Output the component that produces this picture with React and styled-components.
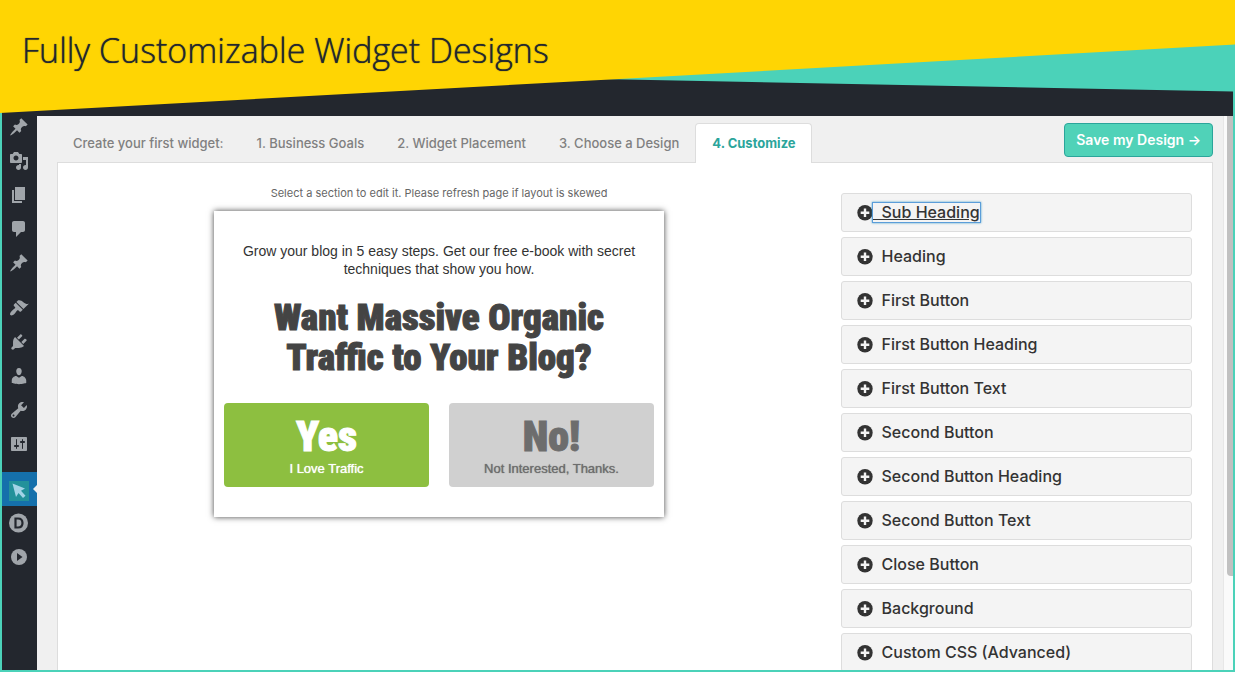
import React from 'react';
import styled, { createGlobalStyle, css } from 'styled-components';

const teal = '#4bd2b9';
const navy = '#23272e';
const uiFont = "Inter, 'Liberation Sans', sans-serif";

const GlobalStyle = createGlobalStyle`
  *, *::before, *::after { box-sizing: border-box; }
  body { margin: 0; background: #fff; font-family: ${uiFont}; color: #333; }
  h1, h2, p, ul { margin: 0; padding: 0; }
  ul { list-style: none; }
  a { color: inherit; text-decoration: none; }
`;

const Page = styled.div`
  display: flex;
  flex-direction: column;
  height: 100vh;
  padding-bottom: 28px;
`;

const Banner = styled.header`
  position: relative;
  flex: none;
  height: 116px;
  padding: 26px 22px;
`;

const BannerArt = styled.svg`
  position: absolute;
  inset: 0;
  width: 100%;
  height: 100%;
`;

const Title = styled.h1`
  position: relative;
  font: 300 34px/48px 'Open Sans', 'Noto Sans', sans-serif;
  color: ${navy};
  text-shadow: 0 0 1px ${navy};
`;

const Frame = styled.div`
  display: flex;
  flex: 1;
  min-height: 0;
  border: solid ${teal};
  border-width: 0 2px 2px;
  background: #f0f0f0;
`;

const Sidebar = styled.nav`
  flex: none;
  width: 35px;
  background: ${navy};
  color: #a0a5aa;
`;

const MenuGroups = styled.div`
  position: relative;
  display: flex;
  flex-direction: column;
  gap: 11px;
  margin-top: -6px;
`;

const MenuLink = styled.a`
  position: relative;
  display: flex;
  align-items: center;
  justify-content: center;
  height: 34px;
  padding-right: 1px;
  ${(p) => p.$active && css`
    padding-top: 4px;
    background: #1570ab;
    &::after {
      content: '';
      position: absolute;
      right: 0;
      top: 13px;
      border: solid transparent;
      border-width: 4px 4px 4px 0;
      border-right-color: #f0f0f0;
    }
  `}
`;

const Main = styled.main`
  display: flex;
  flex-direction: column;
  flex: 1;
  min-width: 0;
  padding: 7px 10px 0 20px;
  overflow: hidden;
`;

const Wizard = styled.div`
  display: flex;
  align-items: flex-start;
  justify-content: space-between;
  flex: none;
`;

const Steps = styled.div`
  display: flex;
  position: relative;
  margin-bottom: -1px;
`;

const stepBox = css`
  height: 40px;
  padding: 0 15px 0 16px;
  border: 1px solid transparent;
  border-bottom: 0;
  font-size: 13px;
  line-height: 39px;
  white-space: nowrap;
`;

const StepsLabel = styled.span`
  ${stepBox}
  padding-left: 15px;
  font-weight: 500;
  color: #808080;
`;

const Step = styled.a`
  ${stepBox}
  font-weight: ${(p) => (p.$active ? 700 : 500)};
  color: ${(p) => (p.$active ? '#2ba59b' : '#808080')};
  ${(p) => p.$active && css`
    border-color: #ddd;
    border-radius: 4px 4px 0 0;
    background: #fff;
  `}
`;

const SaveButton = styled.button`
  height: 34px;
  padding: 0 11px;
  border: 1px solid #2ba59b;
  border-radius: 4px;
  background: #50d2b8;
  color: #fff;
  font: 600 14px/32px ${uiFont};
  white-space: nowrap;
`;

const Panel = styled.section`
  display: grid;
  grid-template-columns: minmax(0, 1fr) 351px;
  gap: 21px;
  flex: 1;
  min-height: 0;
  padding: 0 20px 0 0;
  border: 1px solid #ddd;
  border-bottom: 0;
  background: #fff;
  overflow: hidden;
`;

const Preview = styled.div`
  display: flex;
  flex-direction: column;
  align-items: center;
  padding-top: 20px;
`;

const Hint = styled.p`
  font-size: 11px;
  line-height: 20px;
  color: #666;
`;

const Widget = styled.article`
  width: 450px;
  max-width: 100%;
  margin-top: 8px;
  padding: 31px 10px 30px;
  background: #fff;
  box-shadow: 0 0 6px #444;
  font-family: 'Liberation Sans', Arial, sans-serif;
  text-align: center;
`;

const heavyFont = "Impact, 'Roboto Condensed', 'Liberation Sans Narrow', Roboto, sans-serif";

const Lead = styled.p`
  padding: 0 16px;
  font-size: 14px;
  line-height: 18px;
`;

const Headline = styled.h2`
  margin: 20px 0 25px;
  font: 900 37px/40px ${heavyFont};
  color: #444;
  -webkit-text-stroke: 1px #444;
`;

const Choices = styled.div`
  display: grid;
  grid-template-columns: 1fr 1fr;
  gap: 20px;
`;

const Choice = styled.button`
  display: flex;
  flex-direction: column;
  align-items: center;
  height: 84px;
  padding: 10px 0 0;
  border: 0;
  border-radius: 4px;
  background: ${(p) => (p.$primary ? '#8dbf40' : '#d0d0d0')};
  color: ${(p) => (p.$primary ? '#fff' : '#6d6d6d')};
  font: 13px/18px 'Liberation Sans', Arial, sans-serif;
`;

const ChoiceTitle = styled.strong`
  font: 900 42px/47px ${heavyFont};
  -webkit-text-stroke: 1px currentColor;
`;

const ChoiceText = styled.span`
  text-shadow: 0 0 1px currentColor;
`;

const Sections = styled.ul`
  display: flex;
  flex-direction: column;
  gap: 5px;
  padding-top: 30px;
`;

const SectionRow = styled.li`
  display: flex;
  align-items: center;
  flex: none;
  height: 39px;
  padding: 0 15px;
  border: 1px solid #ddd;
  border-radius: 3px;
  background: #f4f4f4;
`;

const SectionLink = styled.a`
  font-size: 16px;
  line-height: 19px;
  font-weight: 500;
  white-space: pre;
  ${(p) => p.$focused && css`
    text-decoration: underline;
    outline: 1px solid #5b9dd9;
    box-shadow: 0 0 2px 1px rgba(30, 140, 190, 0.8);
  `}
`;

const ScrollTrack = styled.div`
  flex: none;
  width: 10px;
  padding-left: 3px;
  border-left: 1px solid #e7e7e7;
  background: #fafafa;
`;

const ScrollThumb = styled.div`
  height: 83%;
  border-radius: 0 0 0 4px;
  background: #c1c1c1;
`;

const pin = 'M10.44 3.02l1.82-1.82 6.36 6.35-1.83 1.82c-1.05-.68-2.48-.57-3.41.36l-.75.75c-.92.93-1.04 2.35-.35 3.41l-1.83 1.82-2.41-2.41-2.8 2.79c-.42.42-3.38 2.71-3.8 2.29s1.86-3.39 2.28-3.81l2.79-2.79L4.1 9.36l1.83-1.82c1.05.69 2.48.57 3.4-.36l.75-.75c.93-.92 1.05-2.35.36-3.41z';

const menu = [
  [
    { label: 'Posts', d: pin },
    { label: 'Media', d: 'M13 11V4c0-.55-.45-1-1-1h-1.67L9 1H5L3.67 3H2c-.55 0-1 .45-1 1v7c0 .55.45 1 1 1h10c.55 0 1-.45 1-1zM7 4.5c1.38 0 2.5 1.12 2.5 2.5S8.38 9.5 7 9.5 4.5 8.38 4.5 7 5.62 4.5 7 4.5zM14 6h5v10.5c0 1.38-1.12 2.5-2.5 2.5S14 17.88 14 16.5s1.12-2.5 2.5-2.5c.17 0 .34.02.5.05V9h-3V6zm-4 8.05V13h2v3.5c0 1.38-1.12 2.5-2.5 2.5S7 17.88 7 16.5 8.12 14 9.5 14c.17 0 .34.02.5.05z' },
    { label: 'Pages', d: 'M6 15V2h10v13H6zm-1 1h8v2H3V5h2v11z' },
    { label: 'Comments', d: 'M5 2h9c1.1 0 2 .9 2 2v7c0 1.1-.9 2-2 2h-2l-5 5v-5H5c-1.1 0-2-.9-2-2V4c0-1.1.9-2 2-2z' },
    { label: 'Projects', d: pin },
  ],
  [
    { label: 'Appearance', d: 'M14.48 11.06L7.41 3.99l1.5-1.5c.5-.56 2.3-.47 3.51.32 1.21.8 1.43 1.28 2.91 2.1 1.18.64 2.45 1.26 4.45.85zm-.71.71L6.7 4.7 4.93 6.47c-.39.39-.39 1.02 0 1.41l1.06 1.06c.39.39.39 1.03 0 1.42-.6.6-1.43 1.11-2.21 1.69-.35.26-.7.53-1.01.84C1.43 14.23.4 16.08 1.4 17.07c.99 1 2.84-.03 4.18-1.36.31-.31.58-.66.85-1.02.57-.78 1.08-1.61 1.69-2.21.39-.39 1.02-.39 1.41 0l1.06 1.06c.39.39 1.02.39 1.41 0z' },
    { label: 'Plugins', d: 'M13.11 4.36L9.87 7.6 8 5.73l3.24-3.24c.35-.34 1.05-.2 1.56.32.52.51.66 1.21.31 1.55zm-8 1.77l.91-1.12 9.01 9.01-1.19.84c-.71.71-2.63 1.16-3.82 1.16H6.14L4.9 17.26c-.59.59-1.54.59-2.12 0-.59-.58-.59-1.53 0-2.12l1.24-1.24v-3.88c0-1.13.4-3.19 1.09-3.89zm7.26 3.97l3.24-3.24c.34-.35 1.04-.21 1.55.31.52.51.66 1.21.31 1.55l-3.24 3.25z' },
    { label: 'Users', d: 'M10 9.25c-2.27 0-2.73-3.44-2.73-3.44C7 4.02 7.82 2 9.97 2c2.16 0 2.98 2.02 2.71 3.81 0 0-.41 3.44-2.68 3.44zm0 2.57L12.72 10c2.39 0 4.52 2.33 4.52 4.53v2.49s-3.65 1.13-7.24 1.13c-3.65 0-7.24-1.13-7.24-1.13v-2.49c0-2.25 1.94-4.48 4.47-4.48z' },
    { label: 'Tools', d: 'M16.68 9.77c-1.34 1.34-3.3 1.67-4.95.99l-5.41 6.52c-.99.99-2.59.99-3.58 0s-.99-2.59 0-3.57l6.52-5.42c-.68-1.65-.35-3.61.99-4.95 1.28-1.28 3.12-1.62 4.72-1.06l-2.89 2.89 2.82 2.82 2.86-2.87c.53 1.58.18 3.39-1.08 4.65zM3.81 16.21c.4.39 1.04.39 1.43 0 .4-.4.4-1.04 0-1.43-.39-.4-1.03-.4-1.43 0-.39.39-.39 1.03 0 1.43z' },
    { label: 'Settings', d: 'M18 16V4c0-.55-.45-1-1-1H3c-.55 0-1 .45-1 1v12c0 .55.45 1 1 1h14c.55 0 1-.45 1-1zM8 11h1c.55 0 1 .45 1 1s-.45 1-1 1H8v1.5c0 .28-.22.5-.5.5s-.5-.22-.5-.5V13H6c-.55 0-1-.45-1-1s.45-1 1-1h1V5.5c0-.28.22-.5.5-.5s.5.22.5.5V11zm5-2h-1c-.55 0-1-.45-1-1s.45-1 1-1h1V5.5c0-.28.22-.5.5-.5s.5.22.5.5V7h1c.55 0 1 .45 1 1s-.45 1-1 1h-1v5.5c0 .28-.22.5-.5.5s-.5-.22-.5-.5V9z' },
  ],
  [
    {
      label: 'Widgets',
      active: true,
      art: (
        <>
          <path fill="#23919a" d="M0 0h20v20H0z" />
          <path fill="#a3d3e6" d="M3.500 2.500l12.500 5-4 2.200 4.500 5-2.500 2.300-4.500-5-2.500 4z" />
        </>
      ),
    },
    {
      label: 'Divi',
      art: (
        <>
          <circle cx="9.500" cy="10" r="9.500" fill="currentColor" />
          <path fill="none" stroke={navy} strokeWidth="2.200" d="M6.500 5.500h2.500c2.800 0 4.500 1.700 4.500 4.500s-1.700 4.500-4.500 4.500h-2.500z" />
        </>
      ),
    },
    {
      label: 'Collapse menu',
      art: (
        <>
          <circle cx="10" cy="10" r="8" fill="currentColor" />
          <path fill={navy} d="M8 6l5.500 4-5.500 4z" />
        </>
      ),
    },
  ],
];

const steps = ['1. Business Goals', '2. Widget Placement', '3. Choose a Design', '4. Customize'];

const sections = [
  'Sub Heading', 'Heading', 'First Button', 'First Button Heading', 'First Button Text',
  'Second Button', 'Second Button Heading', 'Second Button Text', 'Close Button',
  'Background', 'Custom CSS (Advanced)',
];

function PlusIcon() {
  return (
    <svg width="16" height="16" viewBox="0 0 16 16" aria-hidden="true">
      <circle cx="8" cy="7.700" r="7.700" fill="#333" />
      <path d="M8 3.400v8.600M3.700 7.700h8.600" stroke="#f4f4f4" strokeWidth="2.400" />
    </svg>
  );
}

export default function App() {
  return (
    <Page>
      <GlobalStyle />
      <Banner>
        <BannerArt viewBox="0 0 1235 116" preserveAspectRatio="none" aria-hidden="true">
          <path fill={teal} d="M0 0h1235v116H0z" />
          <path fill={navy} d="M2 112L600 79 1233 91.500V116H2z" />
          <path fill="#ffd503" d="M0 0h1235v44.500L610 79.500 0 113z" />
        </BannerArt>
        <Title>Fully Customizable Widget Designs</Title>
      </Banner>
      <Frame>
        <Sidebar aria-label="Admin menu">
          <MenuGroups>
            {menu.map((group, i) => (
              <ul key={i}>
                {group.map((item, j) => (
                  <li key={j}>
                    <MenuLink href="#" $active={item.active} aria-label={item.label}>
                      <svg width="20" height="20" viewBox="0 0 20 20" aria-hidden="true">
                        {item.art || <path fill="currentColor" d={item.d} />}
                      </svg>
                    </MenuLink>
                  </li>
                ))}
              </ul>
            ))}
          </MenuGroups>
        </Sidebar>
        <Main>
          <Wizard>
            <Steps>
              <StepsLabel>Create your first widget:</StepsLabel>
              {steps.map((s, i) => (
                <Step key={s} href="#" $active={i === 3}>{s}</Step>
              ))}
            </Steps>
            <SaveButton type="button">Save my Design →</SaveButton>
          </Wizard>
          <Panel>
            <Preview>
              <Hint>Select a section to edit it. Please refresh page if layout is skewed</Hint>
              <Widget>
                <Lead>Grow your blog in 5 easy steps. Get our free e-book with secret techniques that show you how.</Lead>
                <Headline>Want Massive Organic<br />Traffic to Your Blog?</Headline>
                <Choices>
                  <Choice type="button" $primary>
                    <ChoiceTitle>Yes</ChoiceTitle>
                    <ChoiceText>I Love Traffic</ChoiceText>
                  </Choice>
                  <Choice type="button">
                    <ChoiceTitle>No!</ChoiceTitle>
                    <ChoiceText>Not Interested, Thanks.</ChoiceText>
                  </Choice>
                </Choices>
              </Widget>
            </Preview>
            <Sections>
              {sections.map((s, i) => (
                <SectionRow key={s}>
                  <PlusIcon />
                  <SectionLink href="#" $focused={i === 0}>{'\u00a0\u00a0' + s}</SectionLink>
                </SectionRow>
              ))}
            </Sections>
          </Panel>
        </Main>
        <ScrollTrack><ScrollThumb /></ScrollTrack>
      </Frame>
    </Page>
  );
}
